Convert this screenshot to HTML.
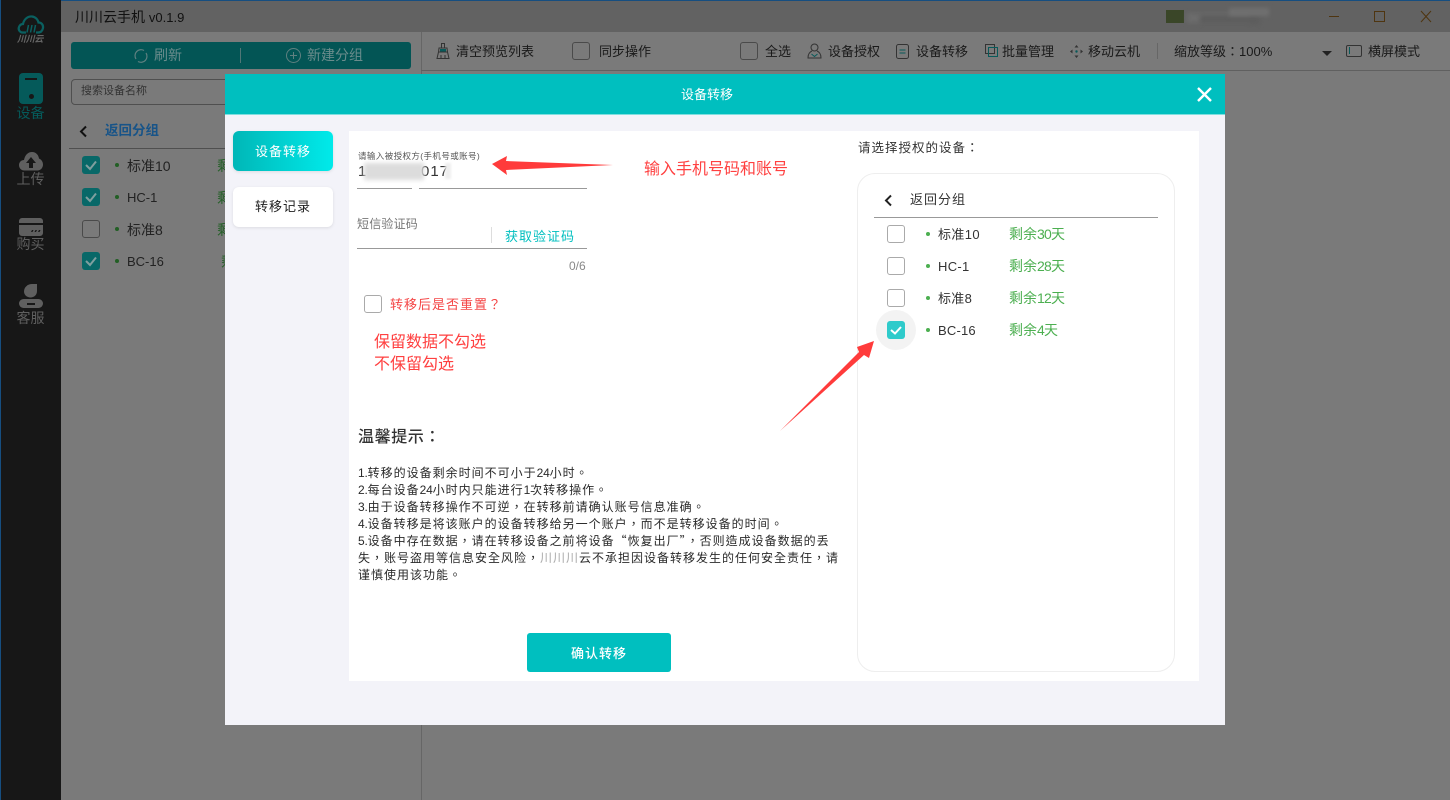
<!DOCTYPE html>
<html lang="zh-CN"><head><meta charset="utf-8"><title>川川云手机</title>
<style>
*{box-sizing:border-box;margin:0;padding:0}
html,body{width:1450px;height:800px;overflow:hidden;background:#7a7a7a}
body{position:relative;font-family:"Liberation Sans","Noto Sans CJK SC",sans-serif;color:#222}
.a{position:absolute}
.t{position:absolute;white-space:nowrap;line-height:1}
.tc-font{font-family:"Noto Sans CJK TC","Liberation Sans",sans-serif}
.cb{position:absolute;width:18px;height:18px;border:1px solid #aaa;border-radius:3px;background:transparent}
.tc{position:absolute;width:18px;height:18px;border:1px solid #4a4a4a;border-radius:3px}
.ck{position:absolute;width:18px;height:18px;border-radius:3px;background:#086868}
svg{position:absolute;overflow:visible}
.tool{font-size:13px;color:#1a1a1a}
.side{font-size:14px;color:#5f5f5f;width:61px;text-align:center;left:0}
.tip{font-size:12px;color:#2a2a2a;letter-spacing:1px;left:358px;font-family:"Noto Sans CJK TC","Liberation Sans",sans-serif}
.n{letter-spacing:-.2px;font-family:"Liberation Sans",sans-serif}
.g{letter-spacing:-.8px}
.dot{position:absolute;width:5px;height:5px;border-radius:50%}
</style></head><body>

<!-- title bar -->
<div class="a" style="left:0;top:0;width:1450px;height:32px;background:#626262"></div>
<div class="a" style="left:0;top:0;width:1450px;height:1px;background:#164e80"></div>
<div class="t" style="left:75px;top:10px;font-size:14px;color:#111">川川云手机 <span style="font-size:13px">v0.1.9</span></div>
<div class="a" style="left:1166px;top:10px;width:18px;height:13px;background:#3a4628"></div>
<div class="a" style="left:1187px;top:13px;width:62px;height:10px;background:#6c6c6c;filter:blur(2px)"></div>
<div class="a" style="left:1200px;top:15px;width:60px;height:9px;background:#5d5d5d;filter:blur(2px)"></div>
<div class="a" style="left:1229px;top:8px;width:40px;height:8px;background:#707070;filter:blur(2px)"></div>
<div class="a" style="left:1329px;top:16px;width:10px;height:1px;background:#4f3510"></div>
<div class="a" style="left:1374px;top:11px;width:11px;height:11px;border:1px solid #4f3510"></div>
<svg style="left:1421px;top:11px" width="11" height="11"><path d="M0 0L10 11M10 0L0 11" stroke="#4f3510" fill="none"/></svg>

<!-- sidebar -->
<div class="a" style="left:0;top:0;width:61px;height:800px;background:#171717"></div>
<div class="a" style="left:0;top:0;width:1px;height:800px;background:#164e80"></div>
<svg style="left:17px;top:14px" width="28" height="20" viewBox="0 0 28 20"><path d="M9 18.500H5C2.500 18 1 15.500 2 13C3 10.500 5 10 6 10C7 5 11 2 15 2.500C19 3 21 6 21.500 8.500C24.500 8.500 26.500 11 26 14C25.500 16.500 24 18.500 21 18.500H19" fill="none" stroke="#0a6060" stroke-width="2.200"/><path d="M11.500 11L10 18.500M15 11L13.500 18.500M18.500 11L17 18.500" stroke="#0a6060" stroke-width="1.500"/></svg>
<div class="t" style="left:17px;top:35px;font-size:9px;font-weight:bold;font-style:italic;color:#666;letter-spacing:-.3px">川川云</div>
<div class="a" style="left:19px;top:73px;width:24px;height:31px;border-radius:4px;background:#055a5a"></div>
<div class="a" style="left:25px;top:78px;width:12px;height:2px;background:#171717"></div>
<div class="a" style="left:29px;top:94px;width:5px;height:5px;border-radius:50%;background:#171717"></div>
<div class="t side" style="top:106px;color:#055a5a">设备</div>
<svg style="left:19px;top:151px" width="24" height="20" viewBox="0 0 24 20"><path d="M5.500 19.500C2 19.500 0 17 0 14C0 11 2.500 9 5 9C6 4 9 1 13 1C17 1 19.500 4 20 7.500C22.500 8.500 24 11 24 13.500C24 17 21.500 19.500 18.500 19.500Z" fill="#5f5f5f"/><path d="M12 6L17 12H14V17H10V12H7Z" fill="#171717"/></svg>
<div class="t side" style="top:172px">上传</div>
<svg style="left:19px;top:218px" width="24" height="18" viewBox="0 0 24 18"><path d="M0 5V3C0 1.500 1.500 0 3 0H21C22.500 0 24 1.500 24 3V5Z" fill="#5f5f5f"/><path d="M0 7H24V15C24 16.500 22.500 18 21 18H3C1.500 18 0 16.500 0 15Z" fill="#5f5f5f"/><path d="M12 14L13 12H14.500L13.500 14ZM15.500 14L16.500 12H18L17 14ZM19 14L20 12H21.500L20.500 14Z" fill="#171717"/></svg>
<div class="t side" style="top:237px">购买</div>
<svg style="left:19px;top:284px" width="24" height="24" viewBox="0 0 24 24"><path d="M18 0V7C18 11 15 13.500 11.500 13.500C8 13.500 5 11 5 7.500C5 3 9 0 13 0Z" fill="#5f5f5f"/><rect x="0" y="15" width="24" height="9" rx="4.500" fill="#5f5f5f"/><rect x="8" y="19" width="8" height="2" fill="#171717"/></svg>
<div class="t side" style="top:311px">客服</div>

<!-- left panel -->
<div class="a" style="left:71px;top:42px;width:340px;height:27px;border-radius:3px;background:#035555"></div>
<svg style="left:134px;top:49px" width="14" height="14" viewBox="0 0 14 14"><path d="M2 10A6 6 0 0 1 10 1.500M12 4A6 6 0 0 1 4 12.500" fill="none" stroke="#5f8080" stroke-width="1.200"/></svg>
<div class="t" style="left:154px;top:48px;font-size:14px;color:#6a8c8c">刷新</div>
<div class="a" style="left:240px;top:48px;width:1px;height:15px;background:#517676"></div>
<svg style="left:286px;top:48px" width="15" height="15" viewBox="0 0 15 15"><circle cx="7.500" cy="7.500" r="7" fill="none" stroke="#5f8080"/><path d="M7.500 4V11M4 7.500H11" stroke="#5f8080"/></svg>
<div class="t" style="left:307px;top:48px;font-size:14px;color:#6a8c8c">新建分组</div>
<div class="a" style="left:71px;top:79px;width:170px;height:26px;border:1px solid #4f4f4f;border-radius:4px"></div>
<div class="t" style="left:81px;top:86px;font-size:11px;color:#333">搜索设备名称</div>
<svg style="left:79px;top:125px" width="9" height="13"><path d="M7 1.500L2 6.500L7 11.500" fill="none" stroke="#111" stroke-width="2"/></svg>
<div class="t" style="left:105px;top:124px;font-size:13.500px;font-weight:bold;color:#185488">返回分组</div>
<div class="a" style="left:69px;top:148px;width:156px;height:1px;background:#4f4f4f"></div>
<div class="ck" style="left:82px;top:156px"></div><svg style="left:82px;top:156px" width="18" height="18"><path d="M4 9L8 13L14 5.500" fill="none" stroke="#7f9f9f" stroke-width="2"/></svg>
<div class="ck" style="left:82px;top:188px"></div><svg style="left:82px;top:188px" width="18" height="18"><path d="M4 9L8 13L14 5.500" fill="none" stroke="#7f9f9f" stroke-width="2"/></svg>
<div class="tc" style="left:82px;top:220px"></div>
<div class="ck" style="left:82px;top:252px"></div><svg style="left:82px;top:252px" width="18" height="18"><path d="M4 9L8 13L14 5.500" fill="none" stroke="#7f9f9f" stroke-width="2"/></svg>
<div class="dot" style="left:115px;top:163px;width:4px;height:4px;background:#225f25"></div>
<div class="dot" style="left:115px;top:195px;width:4px;height:4px;background:#225f25"></div>
<div class="dot" style="left:115px;top:227px;width:4px;height:4px;background:#225f25"></div>
<div class="dot" style="left:115px;top:259px;width:4px;height:4px;background:#225f25"></div>
<div class="t" style="left:127px;top:159px;font-size:14px;color:#222">标准10</div>
<div class="t" style="left:127px;top:191px;font-size:13px;color:#222">HC-1</div>
<div class="t" style="left:127px;top:223px;font-size:14px;color:#222">标准8</div>
<div class="t" style="left:127px;top:255px;font-size:13px;color:#222">BC-16</div>
<div class="t" style="left:217px;top:159px;font-size:14px;color:#225f25">剩</div>
<div class="t" style="left:217px;top:191px;font-size:14px;color:#225f25">剩</div>
<div class="t" style="left:217px;top:223px;font-size:14px;color:#225f25">剩</div>
<div class="t" style="left:221px;top:255px;font-size:14px;color:#225f25">剩</div>

<!-- toolbar -->
<div class="a" style="left:421px;top:32px;width:1px;height:768px;background:#666"></div>
<div class="a" style="left:421px;top:70px;width:1029px;height:1px;background:#606060"></div>
<svg style="left:436px;top:43px" width="14" height="16" viewBox="0 0 14 16"><path d="M5.500 .5H8.500V5H5.500ZM3 5H11L11.500 9H2.500ZM2.500 9L1 15.500H13L11.500 9M5 15.500V12M9 15.500V12" fill="none" stroke="#333"/><rect x="4" y="6" width="6" height="2.500" fill="#085a5a"/></svg>
<div class="t tool" style="left:456px;top:45px">清空预览列表</div>
<div class="tc" style="left:572px;top:42px"></div>
<div class="t tool" style="left:599px;top:45px">同步操作</div>
<div class="tc" style="left:740px;top:42px"></div>
<div class="t tool" style="left:765px;top:45px">全选</div>
<svg style="left:807px;top:43px" width="15" height="16" viewBox="0 0 15 16"><circle cx="7.500" cy="4.500" r="3.500" fill="none" stroke="#333"/><path d="M5 8C2.500 9 1 11 1 15H14C14 11 12.500 9 10 8" fill="none" stroke="#333"/><path d="M4.500 11L7.500 13.500L10.500 11" fill="none" stroke="#085a5a"/></svg>
<div class="t tool" style="left:828px;top:45px">设备授权</div>
<svg style="left:896px;top:44px" width="14" height="15" viewBox="0 0 14 15"><rect x=".5" y=".5" width="12" height="14" rx="2" fill="none" stroke="#333"/><path d="M3.500 6H9.500M3.500 9H9.500" stroke="#085a5a"/></svg>
<div class="t tool" style="left:916px;top:45px">设备转移</div>
<svg style="left:985px;top:44px" width="13" height="14" viewBox="0 0 13 14"><rect x=".5" y=".5" width="9" height="9" fill="none" stroke="#333"/><rect x="3.500" y="3.500" width="9" height="9" fill="none" stroke="#085a5a"/></svg>
<div class="t tool" style="left:1002px;top:45px">批量管理</div>
<svg style="left:1070px;top:45px" width="13" height="13" viewBox="0 0 13 13"><path d="M6.500 0L8.500 2.500H4.500ZM6.500 13L4.500 10.500H8.500ZM0 6.500L2.500 4.500V8.500ZM13 6.500L10.500 8.500V4.500Z" fill="#333"/><circle cx="6.500" cy="6.500" r="1.200" fill="#085a5a"/></svg>
<div class="t tool" style="left:1088px;top:45px">移动云机</div>
<div class="a" style="left:1157px;top:43px;width:1px;height:16px;background:#666"></div>
<div class="t tool tc-font" lang="zh-TW" style="left:1174px;top:44px">缩放等级：<span style="font-family:'Liberation Sans',sans-serif">100%</span></div>
<svg style="left:1322px;top:51px" width="10" height="5"><path d="M0 0H10L5 5Z" fill="#222"/></svg>
<div class="a" style="left:1346px;top:45px;width:16px;height:12px;border:1px solid #333;border-radius:2px"></div>
<div class="a" style="left:1349px;top:47px;width:1px;height:7px;background:#085a5a"></div>
<div class="t tool" style="left:1368px;top:45px">横屏模式</div>

<!-- modal -->
<div class="a" style="left:225px;top:74px;width:1000px;height:651px;background:#f3f3f9"></div>
<div class="a" style="left:225px;top:74px;width:1000px;height:41px;background:#00bfbf;border-bottom:1px solid #7fdfdf"></div>
<div class="t" style="left:681px;top:88px;font-size:13px;color:#fff">设备转移</div>
<svg style="left:1197px;top:87px" width="15" height="15"><path d="M1 1L14 14M14 1L1 14" stroke="#fff" stroke-width="2.400" fill="none"/></svg>
<div class="a" style="left:233px;top:131px;width:100px;height:40px;border-radius:6px;background:linear-gradient(90deg,#00b7b7,#00eaea);box-shadow:0 1px 3px rgba(0,0,0,.1)"></div>
<div class="t" style="left:255px;top:145px;font-size:13px;letter-spacing:1px;color:#fff">设备转移</div>
<div class="a" style="left:233px;top:187px;width:100px;height:40px;border-radius:6px;background:#fff;box-shadow:0 1px 3px rgba(0,0,0,.1)"></div>
<div class="t" style="left:255px;top:200px;font-size:13px;letter-spacing:1px;color:#222">转移记录</div>

<div class="a" style="left:349px;top:131px;width:850px;height:550px;background:#fff"></div>
<div class="t" style="left:358px;top:152px;font-size:8.500px;color:#555;letter-spacing:.4px">请输入被授权方(手机号或账号)</div>
<div class="t" style="left:358px;top:164px;font-size:15px;color:#333">1</div>
<div class="t" style="left:421px;top:164px;font-size:15px;color:#333;letter-spacing:1px">017</div>
<div class="a" style="left:364px;top:163px;width:60px;height:17px;background:#dcdcdc;filter:blur(2px)"></div>
<div class="a" style="left:445px;top:163px;width:6px;height:16px;background:#eee;filter:blur(1px)"></div>
<div class="a" style="left:357px;top:188px;width:230px;height:1px;background:#999"></div>
<div class="a" style="left:412px;top:186px;width:7px;height:5px;background:#fff"></div>
<div class="t" style="left:357px;top:218px;font-size:12px;color:#777;letter-spacing:.2px">短信验证码</div>
<div class="a" style="left:491px;top:227px;width:1px;height:16px;background:#ddd"></div>
<div class="t" style="left:505px;top:230px;font-size:13px;letter-spacing:1px;color:#00bfbf">获取验证码</div>
<div class="a" style="left:357px;top:248px;width:230px;height:1px;background:#999"></div>
<div class="t" style="left:569px;top:260px;font-size:12px;color:#888">0/6</div>
<div class="cb" style="left:364px;top:295px"></div>
<div class="t tc-font" lang="zh-TW" style="left:390px;top:297px;font-size:13px;letter-spacing:1px;color:#f44545">转移后是否重置？</div>
<div class="t" style="left:374px;top:335px;font-size:16px;color:#ff4040">保留数据不勾选</div>
<div class="t" style="left:374px;top:357px;font-size:16px;color:#ff4040">不保留勾选</div>
<div class="t" style="left:644px;top:162px;font-size:16px;color:#ff4040">输入手机号码和账号</div>
<svg style="left:0;top:0" width="1450" height="800"><polygon points="492,164 507,156 506,161 613,165 506,170 507,175" fill="#ff3b3b"/></svg>
<div class="t tc-font" lang="zh-TW" style="left:358px;top:427px;font-size:16px;letter-spacing:.6px;color:#333;font-weight:500">温馨提示：</div>
<div lang="zh-TW">
<div class="t tip" style="top:467px"><span class="n">1.</span>转移的设备剩余时间不可小于<span class="n">24</span>小时。</div>
<div class="t tip" style="top:484px"><span class="n">2.</span>每台设备<span class="n">24</span>小时内只能进行<span class="n">1</span>次转移操作。</div>
<div class="t tip" style="top:501px"><span class="n">3.</span>由于设备转移操作不可逆，在转移前请确认账号信息准确。</div>
<div class="t tip" style="top:518px"><span class="n">4.</span>设备转移是将该账户的设备转移给另一个账户，而不是转移设备的时间。</div>
<div class="t tip" style="top:535px"><span class="n">5.</span>设备中存在数据，请在转移设备之前将设备“恢复出厂”，否则造成设备数据的丢</div>
<div class="t tip" style="top:552px">失，账号盗用等信息安全风险，<span style="color:#aaa">川川川</span>云不承担因设备转移发生的任何安全责任，请</div>
<div class="t tip" style="top:569px">谨慎使用该功能。</div>
</div>
<div class="a" style="left:527px;top:633px;width:144px;height:39px;border-radius:3px;background:#00bfbf"></div>
<div class="t" style="left:571px;top:647px;font-size:13px;letter-spacing:1px;color:#fff;font-weight:500">确认转移</div>

<!-- right device panel -->
<div class="t tc-font" lang="zh-TW" style="left:858px;top:141px;font-size:12.500px;letter-spacing:1px;color:#333">请选择授权的设备：</div>
<div class="a" style="left:857px;top:173px;width:318px;height:499px;border:1px solid #eee;border-radius:18px;background:#fff"></div>
<svg style="left:884px;top:194px" width="9" height="13"><path d="M7 1.500L2 6.500L7 11.500" fill="none" stroke="#222" stroke-width="2"/></svg>
<div class="t" style="left:910px;top:193px;font-size:13px;letter-spacing:1px;color:#333">返回分组</div>
<div class="a" style="left:874px;top:217px;width:284px;height:1px;background:#999"></div>
<div class="cb" style="left:887px;top:225px"></div>
<div class="cb" style="left:887px;top:257px"></div>
<div class="cb" style="left:887px;top:289px"></div>
<div class="a" style="left:876px;top:310px;width:40px;height:40px;border-radius:50%;background:#f3f3f3"></div>
<div class="a" style="left:887px;top:321px;width:18px;height:18px;border-radius:3px;background:#2fcbcb"></div>
<svg style="left:887px;top:321px" width="18" height="18"><path d="M4 9L8 12.500L14 6" fill="none" stroke="#fff" stroke-width="2"/></svg>
<div class="dot" style="left:926px;top:232px;width:4px;height:4px;background:#4caf50"></div>
<div class="dot" style="left:926px;top:264px;width:4px;height:4px;background:#4caf50"></div>
<div class="dot" style="left:926px;top:296px;width:4px;height:4px;background:#4caf50"></div>
<div class="dot" style="left:926px;top:328px;width:4px;height:4px;background:#4caf50"></div>
<div class="t" style="left:938px;top:228px;font-size:13px;letter-spacing:.4px;color:#333">标准10</div>
<div class="t" style="left:938px;top:260px;font-size:13px;letter-spacing:.3px;color:#333">HC-1</div>
<div class="t" style="left:938px;top:292px;font-size:13px;letter-spacing:.3px;color:#333">标准8</div>
<div class="t" style="left:938px;top:324px;font-size:13px;letter-spacing:.2px;color:#333">BC-16</div>
<div class="t" style="left:1009px;top:227px;font-size:14px;color:#4caf50">剩余<span class="g">30</span>天</div>
<div class="t" style="left:1009px;top:259px;font-size:14px;color:#4caf50">剩余<span class="g">28</span>天</div>
<div class="t" style="left:1009px;top:291px;font-size:14px;color:#4caf50">剩余<span class="g">12</span>天</div>
<div class="t" style="left:1009px;top:323px;font-size:14px;color:#4caf50">剩余<span class="g">4</span>天</div>
<svg style="left:0;top:0" width="1450" height="800"><polygon points="780,431 859,352 857,347 874,341 869,358 864,355" fill="#ff3b3b"/></svg>
</body></html>
